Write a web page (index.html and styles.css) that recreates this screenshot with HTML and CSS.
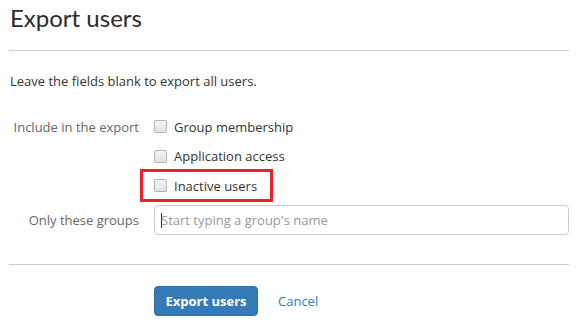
FILE: index.html
```html
<!DOCTYPE html>
<html>
<head>
  <title>Export users</title>
  <link rel="stylesheet" href="styles.css">
</head>
<body>

<div class="page">
  <h1>Export users</h1>
  <hr>

  <p class="hint">Leave the fields blank to export all users.</p>

  <form class="form-horizontal" onsubmit="return false">
    <div class="form-row">
      <div class="form-label">Include in the export</div>
      <div class="form-control-col">
        <label class="check"><input type="checkbox" id="groups"> Group membership</label>
        <label class="check"><input type="checkbox" id="apps"> Application access</label>
        <label class="check highlighted"><input type="checkbox" id="inactive"> Inactive users</label>
      </div>
    </div>

    <div class="form-row input-row">
      <label class="form-label" for="groupSearch">Only these groups</label>
      <div class="form-control-col">
        <input type="text" id="groupSearch" class="text-input" placeholder="Start typing a group's name">
      </div>
    </div>

    <hr class="footer-rule">

    <div class="actions">
      <button class="btn-primary" type="submit">Export users</button>
      <a href="#" class="cancel">Cancel</a>
    </div>
  </form>
</div>

</body>
</html>
```

FILE: styles.css
```css
body {
  margin: 0;
  font-family: "Open Sans", "Noto Sans", sans-serif;
  font-size: 13px;
  color: #333;
  background: #fff;
}
.page {
  padding: 0 8px 0 9px;
}
h1 {
  margin: 0;
  font-family: Lato, "Open Sans", sans-serif;
  font-size: 24px;
  font-weight: normal;
  line-height: 36px;
  color: #2b2b2b;
  padding-left: 1px;
}
hr {
  border: 0;
  border-top: 1px solid #ccc;
  margin: 14px 0 0;
}
.hint {
  margin: 20px 0 0;
  line-height: 20px;
  padding-left: 1px;
}
.form-horizontal {
  margin-top: 21px;
}
.form-row {
  display: flex;
  gap: 15px;
}
.form-label {
  width: 130px;
  flex: none;
  text-align: right;
  line-height: 30px;
  color: #666;
}
.form-control-col {
  flex: 1;
  display: flex;
  flex-direction: column;
}
.check {
  position: relative;
  display: flex;
  align-items: center;
  gap: 7px;
  height: 29.5px;
  align-self: flex-start;
}
.check input {
  appearance: none;
  width: 13px;
  height: 13px;
  margin: 0;
  border: 1px solid #b4b4b4;
  border-radius: 2px;
  background: linear-gradient(#f4f4f4, #e2e2e2);
}
.highlighted::after {
  content: "";
  position: absolute;
  left: -14px;
  right: -16px;
  top: -2px;
  bottom: -1px;
  border: 3px solid #e8212b;
}
.input-row {
  margin-top: 4px;
}
.text-input {
  box-sizing: border-box;
  width: 100%;
  height: 30px;
  padding: 0 6px;
  border: 1px solid #ccc;
  border-radius: 4px;
  font-family: inherit;
  font-size: 13px;
  color: #333;
  background: linear-gradient(#333, #333) 6px 7px / 1px 15px no-repeat, #fff;
}
.text-input::placeholder {
  color: #999;
}
.footer-rule {
  margin-top: 29px;
}
.actions {
  margin-top: 21px;
  padding-left: 145px;
  display: flex;
  align-items: center;
  gap: 20px;
}
.btn-primary {
  height: 30px;
  width: 104px;
  padding: 0;
  border: 1px solid #2e6da4;
  border-radius: 4px;
  background: #337ab7;
  color: #fff;
  font-family: inherit;
  font-size: 13px;
  font-weight: bold;
}
.cancel {
  color: #337ab7;
  text-decoration: none;
}
```
